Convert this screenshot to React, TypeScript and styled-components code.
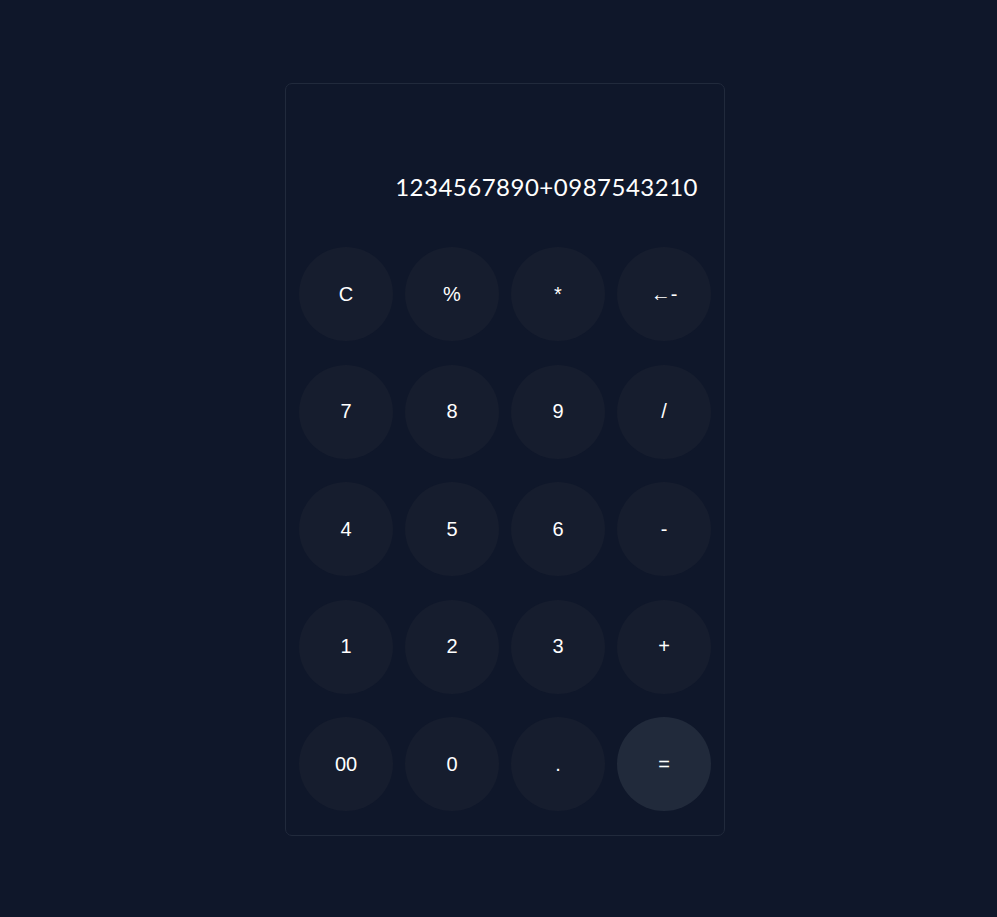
import React, { useState } from "react";
import styled, { createGlobalStyle } from "styled-components";

const Global = createGlobalStyle`
  html, body {
    margin: 0;
    padding: 0;
    background: #0f172a;
  }
  body {
    font-family: "Liberation Sans", Arial, sans-serif;
  }
`;

const Page = styled.main`
  min-height: 917px;
  display: flex;
  justify-content: center;
  align-items: flex-start;
  padding: 83px 0 0 13px;
  box-sizing: border-box;
`;

const Card = styled.section`
  width: 440px;
  box-sizing: border-box;
  border: 1px solid #212a3c;
  border-radius: 7px;
  padding: 0 13px 24px;
  background: #0f172a;
`;

const Display = styled.div`
  height: 163px;
  box-sizing: border-box;
  display: flex;
  justify-content: flex-end;
  align-items: flex-end;
  padding: 0 13px 46px 0;
  color: #ffffff;
  font-family: "Gill Sans", "Gill Sans MT", Lato, "Open Sans", sans-serif;
  font-size: 24px;
  line-height: 29px;
  letter-spacing: 0.5px;
  white-space: nowrap;
`;

const Keys = styled.div`
  display: grid;
  grid-template-columns: repeat(4, 94px);
  grid-auto-rows: 94px;
  justify-content: space-between;
  row-gap: 23.5px;
`;

const Key = styled.button<{ $accent?: boolean }>`
  width: 94px;
  height: 94px;
  border: none;
  border-radius: 50%;
  background: ${(p) => (p.$accent ? "#212a3b" : "#161d2e")};
  color: #ffffff;
  font-family: "Liberation Sans", Arial, sans-serif;
  font-size: 20px;
  display: flex;
  align-items: center;
  justify-content: center;
  padding: 0;
  cursor: pointer;
`;

const keys = [
  "C", "%", "*", "←-",
  "7", "8", "9", "/",
  "4", "5", "6", "-",
  "1", "2", "3", "+",
  "00", "0", ".", "=",
];

export default function App() {
  const [expr] = useState("1234567890+0987543210");
  return (
    <>
      <Global />
      <Page>
        <Card>
          <Display>{expr}</Display>
          <Keys>
            {keys.map((k) => (
              <Key key={k} $accent={k === "="}>
                {k}
              </Key>
            ))}
          </Keys>
        </Card>
      </Page>
    </>
  );
}
